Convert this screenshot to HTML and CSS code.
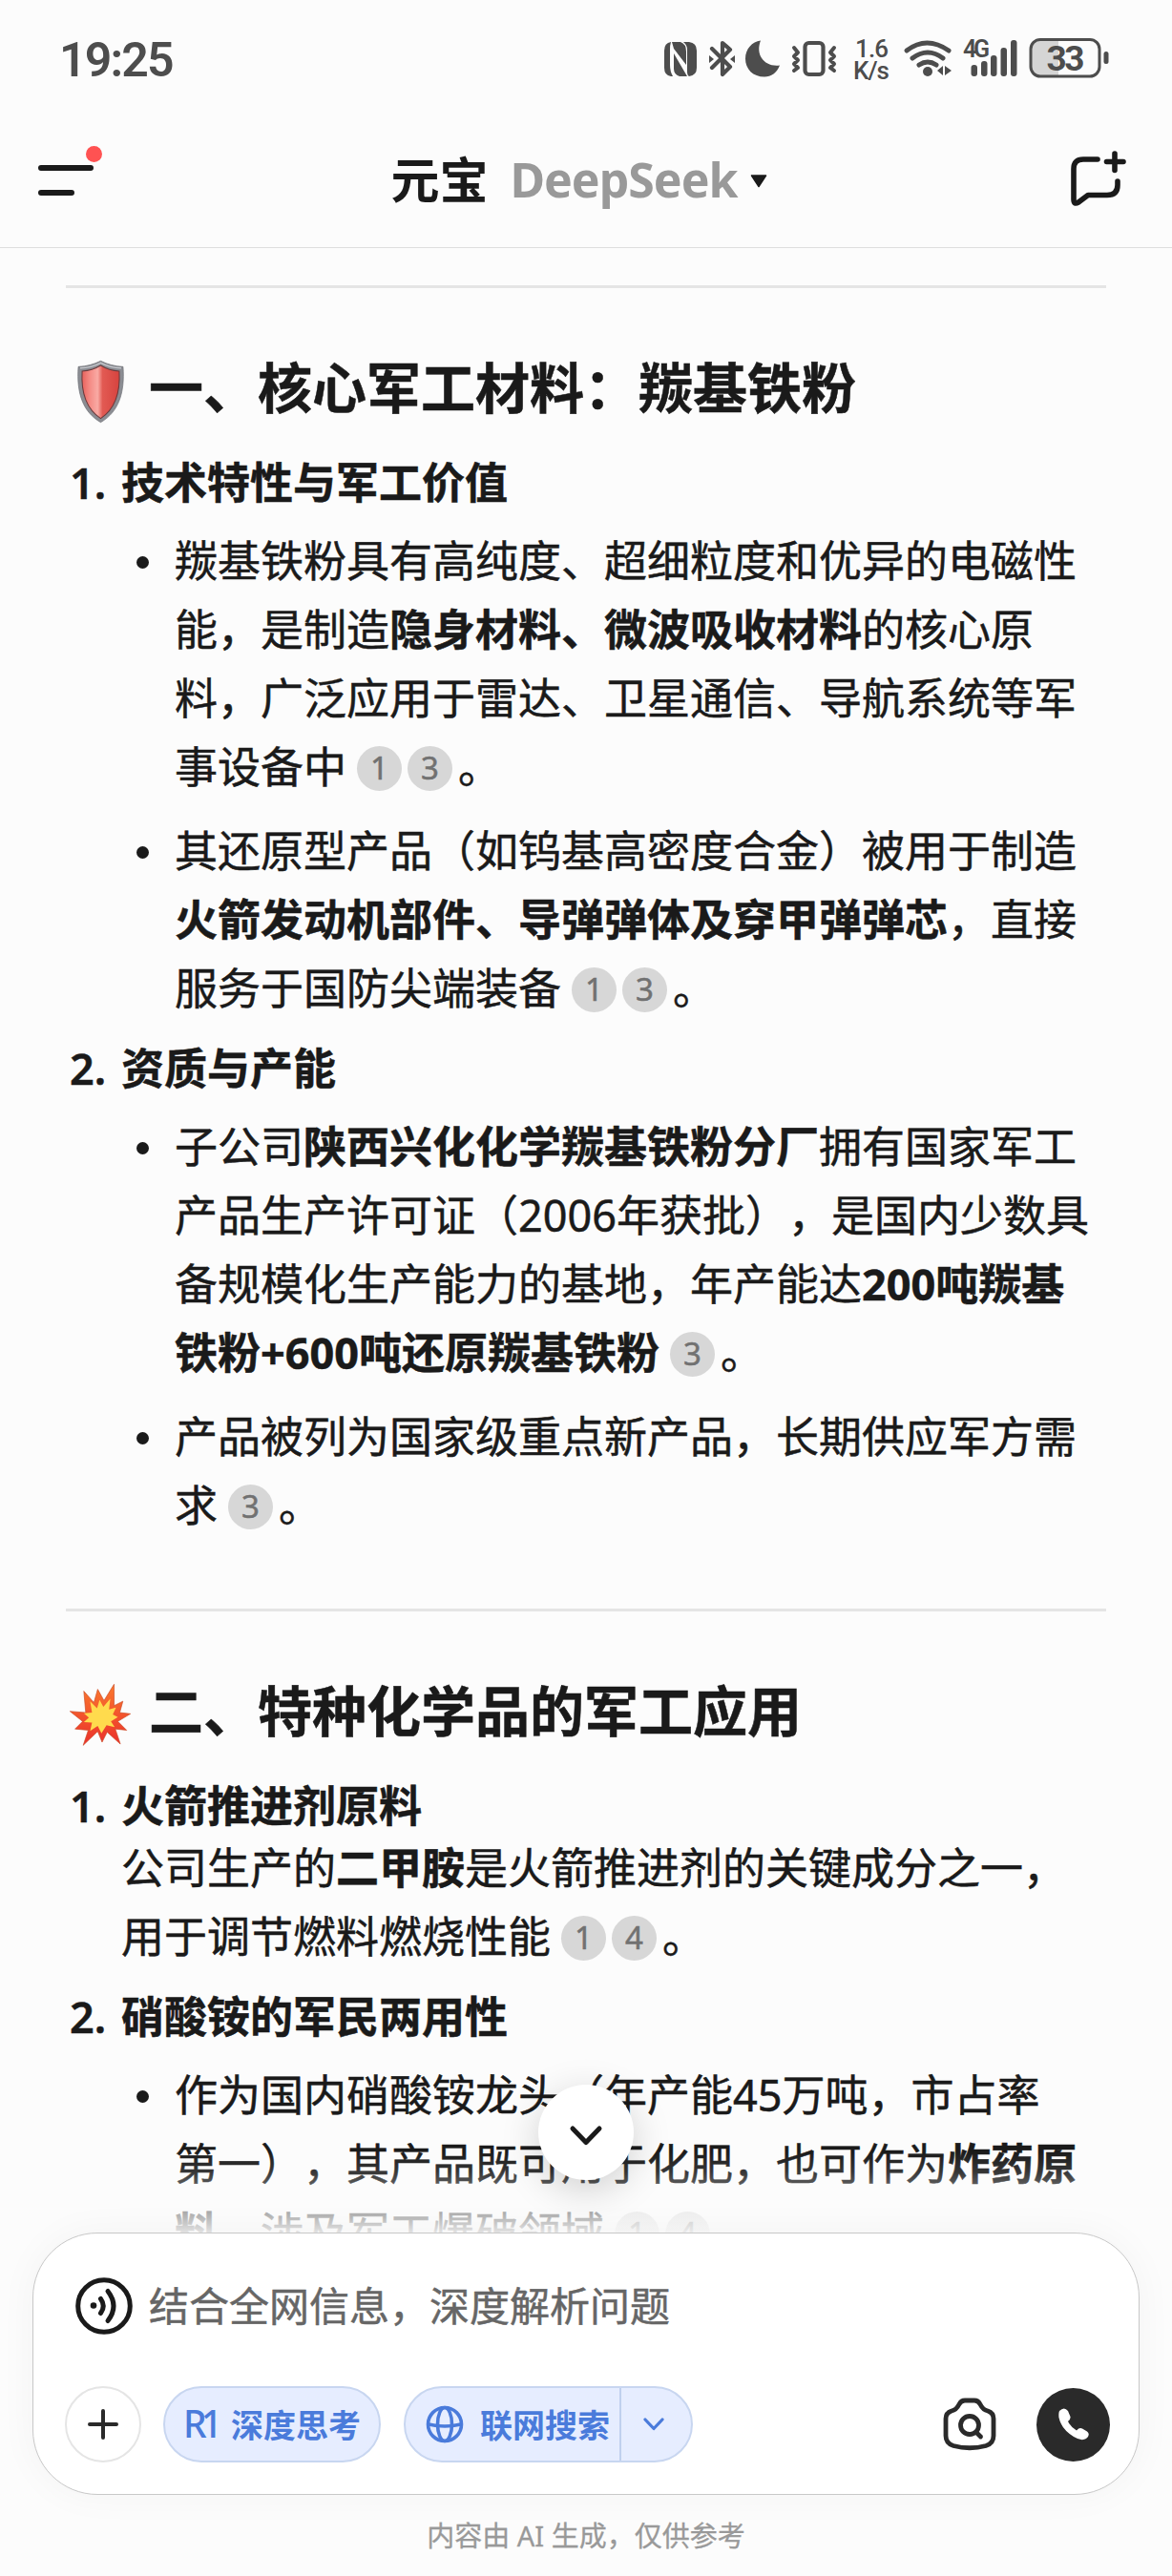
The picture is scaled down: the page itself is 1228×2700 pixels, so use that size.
FILE: index.html
```html
<!DOCTYPE html>
<html lang="zh-CN">
<head>
<meta charset="utf-8">
<title>元宝</title>
<link rel="stylesheet" href="styles.css">
</head>
<body>
<div class="app">
  <div class="status">
    <span class="time">19:25</span>
    <svg class="status-icons" viewBox="690 40 480 45" width="480" height="45">
      <g fill="#4d4d4d">
        <path d="M703 44q-7 1-7 9v18q0 8 7 9h2q-3-5-3-12V52q0-5 1-8z"/>
        <path d="M722 44q8 1 8 9v18q0 8-8 9-2-1-2-5V52q0-5-4-8zM704 44h9q6 2 6 10v14l-13-17zM706 56l14 24h-8q-6-2-6-8z"/>
        <path d="M797 42.500c-6 15 4 28 20 26-3 8-9 12-16 12-12 0-20-8-20-19 0-10 7-18 16-19z"/>
        <path d="M743 58l5 4-5 4zM770 58l-5 4 5 4z"/>
      </g>
      <g fill="none" stroke="#4d4d4d" stroke-width="4.200" stroke-linejoin="round" stroke-linecap="round">
        <path d="M746 51l19 19-8 8V45l8 7-19 19"/>
        <rect x="843.500" y="45" width="19" height="33" rx="4"/>
        <path d="M832 50l4 5-4 4 4 4-4 4 4 4-4 3M874 50l-4 5 4 4-4 4 4 4-4 4 4 3" stroke-width="4"/>
        <path d="M950 53q21-16 44 0M956 61q16-12 32 0M963 68q9-6 18 0" stroke-width="5"/>
      </g>
      <g fill="#4d4d4d">
        <circle cx="972" cy="75" r="5"/>
        <path d="M988 69v10l-6-5zM990 69v10l7-5z"/>
        <rect x="1017.500" y="68" width="6.500" height="12" rx="3"/>
        <rect x="1028" y="64" width="6.500" height="16" rx="3"/>
        <rect x="1038" y="58" width="6.500" height="22" rx="3"/>
        <rect x="1048.500" y="50" width="6.500" height="30" rx="3"/>
        <rect x="1059" y="42" width="6.500" height="38" rx="3"/>
        <path d="M1109 42v38h-20q-9 0-9-9V51q0-9 9-9z" fill="#d5d5d5"/>
        <rect x="1156.500" y="54" width="5" height="13" rx="2.500"/>
      </g>
      <rect x="1080" y="41.500" width="72" height="38.500" rx="10" fill="none" stroke="#4d4d4d" stroke-width="3"/>
      <g class="status-text">
        <text x="896" y="60" font-size="26" textLength="35">1.6</text>
        <text x="894" y="83" font-size="26" textLength="38">K/s</text>
        <text x="1009" y="60" font-size="25" font-weight="600" textLength="28">4G</text>
        <text x="1096.500" y="73.500" font-size="37" font-weight="700" textLength="40">33</text>
      </g>
    </svg>
  </div>
  <header class="topbar">
    <svg class="menu" viewBox="0 0 60 60" width="60" height="60">
      <path d="M3 24h52M3 50h32" stroke="#1a1a1a" stroke-width="6" stroke-linecap="round"/>
    </svg>
    <div class="title"><b>元宝</b><span>DeepSeek</span>
      <svg viewBox="0 0 18 14" width="18" height="14"><path d="M1.500 1h15L9 12.500z" fill="#1a1a1a" stroke="#1a1a1a" stroke-width="1.500" stroke-linejoin="round"/></svg>
    </div>
    <svg class="newchat" viewBox="0 0 58 58" width="58" height="58">
      <path d="M28 9H13Q3 9 3 19V51q0 6 5 3L18 46.500H38Q49 46.500 49 36V32M46 3V20.500M37.500 11.500H55" fill="none" stroke="#1a1a1a" stroke-width="5.600" stroke-linecap="round" stroke-linejoin="round"/>
    </svg>
    <i class="dot"></i>
  </header>
  <main class="content">
    <hr>
    <h2><span class="emoji"><svg viewBox="0 0 100 100" width="67" height="67">
        <defs><linearGradient id="sh" x1="0" x2="1"><stop offset="0" stop-color="#e8625c"/><stop offset=".22" stop-color="#f58d87"/><stop offset=".42" stop-color="#f9aaa4"/><stop offset=".55" stop-color="#e25a53"/><stop offset="1" stop-color="#d6433e"/></linearGradient></defs>
        <path d="M15 11Q34 10 50 2 66 10 85 11C88 52 78 82 50 98 22 82 12 52 15 11z" fill="#8b8d93" stroke="#6c6e74" stroke-width="1"/>
        <path d="M18 13Q35 13 50 5 65 13 82 13" fill="none" stroke="#c5c7cc" stroke-width="2"/>
        <path d="M21 18Q37 17 50 9 63 17 79 18C81 52 73 77 50 92 27 77 19 52 21 18z" fill="url(#sh)" stroke="#6a3b3d" stroke-width="1.500"/>
      </svg></span>一、核心军工材料：羰基铁粉</h2>
    <ol>
      <li><strong>技术特性与军工价值</strong>
        <ul>
          <li>羰基铁粉具有高纯度、超细粒度和优异的电磁性<br>能，是制造<b>隐身材料、微波吸收材料</b>的核心原<br>料，广泛应用于雷达、卫星通信、导航系统等军<br>事设备中<sup>1</sup><sup>3</sup>。</li>
          <li>其还原型产品（如钨基高密度合金）被用于制造<br><b>火箭发动机部件、导弹弹体及穿甲弹弹芯</b>，直接<br>服务于国防尖端装备<sup>1</sup><sup>3</sup>。</li>
        </ul>
      </li>
      <li><strong>资质与产能</strong>
        <ul>
          <li>子公司<b>陕西兴化化学羰基铁粉分厂</b>拥有国家军工<br>产品生产许可证（2006年获批），是国内少数具<br>备规模化生产能力的基地，年产能达<b>200吨羰基<br>铁粉+600吨还原羰基铁粉</b><sup>3</sup>。</li>
          <li>产品被列为国家级重点新产品，长期供应军方需<br>求<sup>3</sup>。</li>
        </ul>
      </li>
    </ol>
    <hr class="second">
    <h2><span class="emoji"><svg viewBox="0 0 100 100" width="66" height="66">
        <defs><linearGradient id="bm" x1="0" x2="0" y1="0" y2="1"><stop offset="0" stop-color="#fb7a2e"/><stop offset="1" stop-color="#ea2f2b"/></linearGradient></defs>
        <path d="M24 13L40 31 46 10 56 28 72 2 72 36 86 29 81 47 98 49 78 61 92 75 74 73 82 97 61 78 53 94 46 77 23 99 31 75 10 73 22 61 2 45 27 47z" fill="url(#bm)" stroke="#c94a25" stroke-width="1"/>
        <path d="M34 29L45 40 49 27 55 38 66 25 64 42 75 39 70 50 78 54 67 61 73 70 60 67 52 80 46 68 34 76 37 63 24 62 32 55 24 48 37 47z" fill="#ffdb4d"/>
      </svg></span>二、特种化学品的军工应用</h2>
    <ol>
      <li><strong>火箭推进剂原料</strong>
        <p>公司生产的<b>二甲胺</b>是火箭推进剂的关键成分之一，<br>用于调节燃料燃烧性能<sup>1</sup><sup>4</sup>。</p>
      </li>
      <li><strong>硝酸铵的军民两用性</strong>
        <ul>
          <li>作为国内硝酸铵龙头（年产能45万吨，市占率<br>第一），其产品既可用于化肥，也可作为<b>炸药原<br>料</b>，涉及军工爆破领域<sup>1</sup><sup>4</sup></li>
        </ul>
      </li>
    </ol>
  </main>
  <footer class="dock">
    <div class="fade"></div>
    <button class="down"><svg viewBox="0 0 34 22" width="34" height="22"><path d="M3 3L17 17.500 31 3" fill="none" stroke="#1a1a1a" stroke-width="5" stroke-linecap="round" stroke-linejoin="round"/></svg></button>
    <section class="card">
      <div class="ask">
        <svg viewBox="0 0 60 60" width="60" height="60"><g fill="none" stroke="#1a1a1a" stroke-width="5" stroke-linecap="round"><circle cx="30" cy="30" r="27.300"/><path d="M26.500 22.500Q32 30 26.500 37.500M34 14.500Q46 30 34 45.500"/></g><circle cx="19" cy="29.500" r="3.300" fill="#1a1a1a"/></svg>
        <span>结合全网信息，深度解析问题</span>
      </div>
      <div class="tools">
        <button class="plus"><svg viewBox="0 0 32 32" width="32" height="32"><path d="M16 2V30M2 16H30" stroke="#2a2a2a" stroke-width="4" stroke-linecap="round"/></svg></button>
        <button class="pill think"><span class="r1">R1</span><span>深度思考</span></button>
        <div class="pill search">
          <svg viewBox="0 0 40 40" width="40" height="40"><g fill="none" stroke="#4a7bdb" stroke-width="3.600"><circle cx="20" cy="20" r="17.500"/><ellipse cx="20" cy="20" rx="7.500" ry="17.500"/><path d="M3 20Q20 24 37 20"/></g></svg>
          <span>联网搜索</span>
          <i><svg viewBox="0 0 22 14" width="22" height="14"><path d="M2 2L11 11.500 20 2" fill="none" stroke="#4a7bdb" stroke-width="3.200" stroke-linecap="round" stroke-linejoin="round"/></svg></i>
        </div>
        <svg class="camera" viewBox="0 0 58 58" width="58" height="58"><g fill="none" stroke="#2a2a2a" stroke-width="4.800" stroke-linecap="round" stroke-linejoin="round"><path d="M24 4H34Q38 4 40 8 43 14 48 15 54 17 54 23V41Q54 49 46 51.500 29 56 12 51.500 4 49 4 41V23Q4 17 10 15 15 14 18 8 20 4 24 4z"/><circle cx="29" cy="30" r="9.500"/><path d="M36 37.500L40.500 42"/></g></svg>
        <button class="call"><svg viewBox="0 0 36 36" width="36" height="36"><path d="M3 4Q8-1 12 4L14.500 10Q15 13 12 15 15 21 21 24.500 24 21 27 22.500L32 25.500Q36 29 31 33 26 36 18 31 5 23 2.500 11 2 6 3 4z" fill="#fff"/></svg></button>
      </div>
    </section>
    <p class="note">内容由 AI 生成，仅供参考</p>
  </footer>
</div>
</body>
</html>
```
FILE: styles.css
```css
* { box-sizing: border-box; margin: 0; padding: 0; }
body { background: #fcfcfc; color: #1a1a1a; font-family: "Noto Sans", "Noto Sans CJK SC", sans-serif; text-spacing-trim: space-all; }
button { border: 0; background: none; font: inherit; color: inherit; display: flex; align-items: center; justify-content: center; }
svg { display: block; flex: none; overflow: visible; }
.app { position: relative; width: 1228px; height: 2700px; overflow: hidden; display: flex; flex-direction: column; }

.status { height: 124px; flex: none; display: flex; justify-content: space-between; align-items: center; padding: 0 58px 0 62px; }
.time { font-family: Roboto, sans-serif; font-weight: 600; font-size: 50px; letter-spacing: -1.800px; color: #4d4d4d; margin-top: 2px; }
.status-text { font-family: Roboto, sans-serif; fill: #4d4d4d; font-weight: 500; }

.topbar { position: relative; height: 136px; flex: none; border-bottom: 1px solid #dedede; display: flex; justify-content: space-between; align-items: flex-start; padding: 28px 48px 0 40px; }
.newchat { margin-top: 6px; }
.title { display: flex; align-items: center; gap: 23px; font-size: 51px; line-height: 72px; margin-left: -9px; }
.title b { font-weight: 700; }
.title span { font-family: "Noto Sans", sans-serif; font-size: 50px; font-weight: 700; letter-spacing: -1px; color: #999; }
.title svg { margin: 4px 0 0 -10px; }
.dot { position: absolute; left: 90px; top: 29px; width: 17px; height: 17px; border-radius: 50%; background: #ff5252; }

.content { height: 2080px; flex: none; overflow: hidden; padding: 39px 69px 0; font-size: 45px; line-height: 72px; -webkit-text-stroke: .5px; }
hr { border: 0; height: 3px; background: #e5e5e5; }
hr.second { margin-top: 72px; }
h2 { display: flex; align-items: center; gap: 15px; margin-top: 59px; height: 90px; font-size: 57px; line-height: 90px; font-weight: 700; }
.emoji { width: 72px; display: flex; justify-content: center; padding-top: 8px; }
ol { list-style: none; counter-reset: n; margin-top: 19px; }
ol > li { counter-increment: n; padding-left: 58px; position: relative; margin-bottom: 12px; }
ol > li::before { content: counter(n) "."; position: absolute; left: 4px; top: 0; font-weight: 600; }
strong { display: block; font-weight: 700; }
ul { list-style: none; margin-top: 10px; }
ul li { position: relative; padding-left: 56px; margin-bottom: 16px; white-space: nowrap; }
ul li:last-child { margin-bottom: 0; }
ul li::before { content: ""; position: absolute; left: 16px; top: 31px; width: 13px; height: 13px; border-radius: 50%; background: #1a1a1a; }
p { white-space: nowrap; }
.content p { margin-top: -7px; }
b { font-weight: 700; }
sup { display: inline-block; width: 47px; height: 47px; border-radius: 50%; background: #d7d7d7; color: #717171; font-size: 33px; line-height: 46px; text-align: center; vertical-align: baseline; position: relative; top: -4px; margin: -10px 6px -10px 0; }
sup:first-of-type { margin-left: 11px; }

.dock { position: absolute; left: 0; right: 0; bottom: 0; height: 360px; background: #fcfcfc; padding: 0 34px; }
.fade { position: absolute; left: 0; right: 0; top: -85px; height: 85px; background: linear-gradient(rgba(252,252,252,0), rgba(252,252,252,.12) 25%, rgba(252,252,252,.9)); }
.down { position: absolute; left: 564px; top: -155px; width: 100px; height: 100px; border-radius: 50%; background: #fff; box-shadow: 0 10px 40px rgba(0,0,0,.18); padding-top: 7px; }
.card { position: relative; height: 275px; border: 1px solid #c8c8c8; border-radius: 68px; background: #fff; box-shadow: 0 0 40px rgba(0,0,0,.04); padding: 46px 30px 0 33px; }
.ask { display: flex; align-items: center; height: 60px; padding-left: 11px; gap: 17px; font-size: 42px; line-height: 60px; color: #666; -webkit-text-stroke: .5px; }
.tools { display: flex; align-items: center; margin-top: 54px; height: 80px; }
.plus { width: 80px; height: 80px; border: 2px solid #e5e5e5; border-radius: 50%; }
.pill { height: 80px; border: 2px solid #c8d6f0; border-radius: 40px; background: #e6edff; color: #4a7bdb; font-size: 34px; font-weight: 700; display: flex; align-items: center; }
.pill span { position: relative; top: -1px; }
.think { width: 228px; margin-left: 23px; gap: 17px; }
.r1 { font-family: "Noto Sans", sans-serif; font-weight: 500; font-size: 39px; letter-spacing: -6px; width: 33px; margin-top: -2px; }
.search { width: 303px; margin-left: 24px; padding-left: 21px; }
.search span { margin-left: 17px; }
.search i { margin-left: 10px; height: 76px; flex: 1; border-left: 2px solid #c0d0ee; display: flex; align-items: center; padding-left: 23px; }
.camera { margin-left: auto; }
.call { width: 77px; height: 77px; border-radius: 50%; background: #2a2a2a; margin-left: 41px; }
.note { margin-top: 21px; text-align: center; font-size: 29px; line-height: 44px; color: #999; -webkit-text-stroke: .3px; }
```
